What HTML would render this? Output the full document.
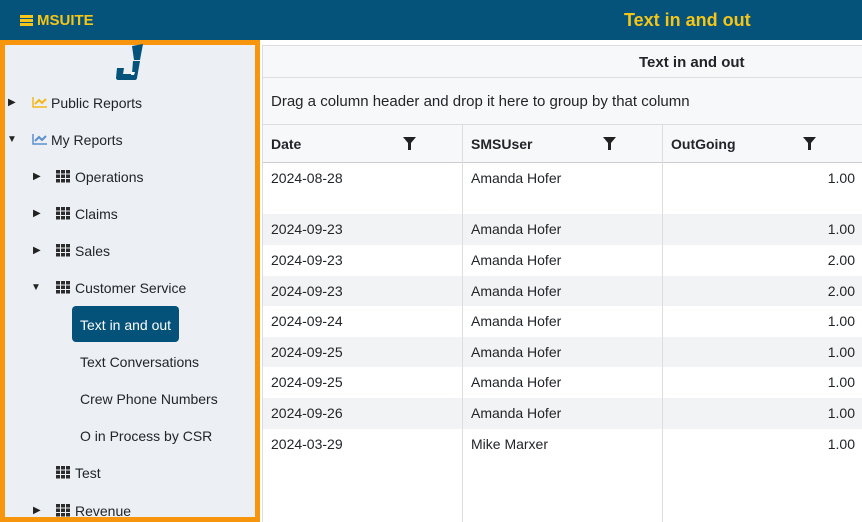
<!DOCTYPE html>
<html><head><style>
*{margin:0;padding:0;box-sizing:border-box}
body{width:862px;height:522px;overflow:hidden;font-family:"Liberation Sans",sans-serif;background:#fff;position:relative;color:#212529}
.top{position:absolute;left:0;top:0;width:862px;height:40px;background:#05527a}
.brand{position:absolute;left:20px;top:12px;color:#f5c518;font-weight:bold;font-size:15px}
.title{position:absolute;left:624px;top:10px;color:#f5c518;font-weight:bold;font-size:18px}
.side{position:absolute;left:0;top:40px;width:260px;height:482px;background:#eceff4;border:5px solid #f7950c}
.it{position:absolute;font-size:14px;color:#212529;white-space:nowrap}
.tri{position:absolute;font-size:10px;color:#222}
.g{display:inline-block;vertical-align:-1px;margin-right:5px}
.sel{position:absolute;left:72px;top:306px;width:107px;height:36px;background:#04527a;border-radius:4px;color:#fff;font-size:14px;padding:11px 0 0 8px}
.main{position:absolute;left:262px;top:45px;width:600px;height:477px;border-left:1px solid #ddd;border-top:1px solid #ddd}
.t1{position:absolute;left:0;top:0;width:600px;height:32px;background:#f7f8f9;border-bottom:1px solid #ddd;font-weight:bold;font-size:15px;padding:8px 0 0 376px}
.t2{position:absolute;left:0;top:32px;width:600px;height:47px;background:#f7f8f9;border-bottom:1px solid #ddd;font-size:15px;padding:15px 0 0 8px}
.hd{position:absolute;top:79px;height:38px;width:600px;background:#f7f8f9;border-bottom:1px solid #ccc;font-weight:bold;font-size:14px}
.row{position:absolute;left:0;width:600px;font-size:14px}
.c{position:absolute;top:0;height:100%;padding:7px 8px}
.vl{position:absolute;top:79px;bottom:0;width:1px;background:#ddd}
.f{position:absolute;top:12px}
</style></head><body>
<div class="top"><div class="brand"><span style="display:inline-block;width:13px;height:11px;vertical-align:-1px;margin-right:4px;background:repeating-linear-gradient(180deg,#f5c518 0 3px,transparent 3px 4px)"></span>MSUITE</div><div class="title">Text in and out</div></div>
<div class="side"></div>
<svg style="position:absolute;left:114px;top:44px" width="32" height="37" viewBox="0 0 32 37"><path d="M18 2l11-2-3 16h-6z M19 17h7l-3 17c0 1-1 2-2 2H4c-1 0-2-1-2-2l1-10h7l-1 6h9z" fill="#05527a"/><path d="M18 28h3l-1 3h-3z" fill="#fff"/></svg>
<svg style="position:absolute;left:32px;top:96px" width="15" height="12"><path d="M1 1v10h14" stroke="#f5b818" stroke-width="1.5" fill="none"/><path d="M3 8l4-4 3 3 4-4" stroke="#f5b818" stroke-width="2" fill="none"/></svg>
<div class="tri" style="left:8px;top:97px">▶</div>
<div class="it" style="left:51px;top:95px">Public Reports</div>
<svg style="position:absolute;left:32px;top:133px" width="15" height="12"><path d="M1 1v10h14" stroke="#5b8fd0" stroke-width="1.5" fill="none"/><path d="M3 8l4-4 3 3 4-4" stroke="#5b8fd0" stroke-width="2" fill="none"/></svg>
<div class="tri" style="left:7px;top:134px">▼</div>
<div class="it" style="left:51px;top:132px">My Reports</div>
<svg width="0" height="0" style="position:absolute"><defs><g id="gr" fill="#2b2b2b"><rect x="0" y="0" width="4" height="3.5"/><rect x="5" y="0" width="4" height="3.5"/><rect x="10" y="0" width="4" height="3.5"/><rect x="0" y="4.5" width="4" height="3.5"/><rect x="5" y="4.5" width="4" height="3.5"/><rect x="10" y="4.5" width="4" height="3.5"/><rect x="0" y="9" width="4" height="3.5"/><rect x="5" y="9" width="4" height="3.5"/><rect x="10" y="9" width="4" height="3.5"/></g></defs></svg>
<div class="tri" style="left:33px;top:171px">▶</div><div class="it" style="left:56px;top:169px"><svg class="g" width="14" height="13"><use href="#gr"/></svg>Operations</div>
<div class="tri" style="left:33px;top:208px">▶</div><div class="it" style="left:56px;top:206px"><svg class="g" width="14" height="13"><use href="#gr"/></svg>Claims</div>
<div class="tri" style="left:33px;top:245px">▶</div><div class="it" style="left:56px;top:243px"><svg class="g" width="14" height="13"><use href="#gr"/></svg>Sales</div>
<div class="tri" style="left:31px;top:282px">▼</div><div class="it" style="left:56px;top:280px"><svg class="g" width="14" height="13"><use href="#gr"/></svg>Customer Service</div>
<div class="sel">Text in and out</div>
<div class="it" style="left:80px;top:354px">Text Conversations</div>
<div class="it" style="left:80px;top:391px">Crew Phone Numbers</div>
<div class="it" style="left:80px;top:428px">O in Process by CSR</div>
<div class="it" style="left:56px;top:465px"><svg class="g" width="14" height="13"><use href="#gr"/></svg>Test</div>
<div class="tri" style="left:33px;top:505px">▶</div><div class="it" style="left:56px;top:503px"><svg class="g" width="14" height="13"><use href="#gr"/></svg>Revenue</div>
<div class="main">
<div class="t1">Text in and out</div>
<div class="t2">Drag a column header and drop it here to group by that column</div>
<div class="hd"><div class="c" style="left:0;padding-top:11px">Date</div><svg class="f" style="left:140px" width="13" height="13"><path d="M0 0h13L8 6v7H5V6z" fill="#222"/></svg><div class="c" style="left:200px;padding-top:11px">SMSUser</div><svg class="f" style="left:340px" width="13" height="13"><path d="M0 0h13L8 6v7H5V6z" fill="#222"/></svg><div class="c" style="left:400px;padding-top:11px">OutGoing</div><svg class="f" style="left:540px" width="13" height="13"><path d="M0 0h13L8 6v7H5V6z" fill="#222"/></svg></div>
<div class="row" style="top:117px;height:51px"><div class="c" style="left:0">2024-08-28</div><div class="c" style="left:200px">Amanda Hofer</div><div class="c" style="right:0">1.00</div></div>
<div class="row" style="top:168px;height:31px;background:#f2f3f4"><div class="c" style="left:0">2024-09-23</div><div class="c" style="left:200px">Amanda Hofer</div><div class="c" style="right:0">1.00</div></div>
<div class="row" style="top:199px;height:31px"><div class="c" style="left:0">2024-09-23</div><div class="c" style="left:200px">Amanda Hofer</div><div class="c" style="right:0">2.00</div></div>
<div class="row" style="top:230px;height:30px;background:#f2f3f4"><div class="c" style="left:0">2024-09-23</div><div class="c" style="left:200px">Amanda Hofer</div><div class="c" style="right:0">2.00</div></div>
<div class="row" style="top:260px;height:31px"><div class="c" style="left:0">2024-09-24</div><div class="c" style="left:200px">Amanda Hofer</div><div class="c" style="right:0">1.00</div></div>
<div class="row" style="top:291px;height:30px;background:#f2f3f4"><div class="c" style="left:0">2024-09-25</div><div class="c" style="left:200px">Amanda Hofer</div><div class="c" style="right:0">1.00</div></div>
<div class="row" style="top:321px;height:31px"><div class="c" style="left:0">2024-09-25</div><div class="c" style="left:200px">Amanda Hofer</div><div class="c" style="right:0">1.00</div></div>
<div class="row" style="top:352px;height:31px;background:#f2f3f4"><div class="c" style="left:0">2024-09-26</div><div class="c" style="left:200px">Amanda Hofer</div><div class="c" style="right:0">1.00</div></div>
<div class="row" style="top:383px;height:31px"><div class="c" style="left:0">2024-03-29</div><div class="c" style="left:200px">Mike Marxer</div><div class="c" style="right:0">1.00</div></div>
<div class="vl" style="left:199px"></div><div class="vl" style="left:399px"></div>
</div>
</body></html>
